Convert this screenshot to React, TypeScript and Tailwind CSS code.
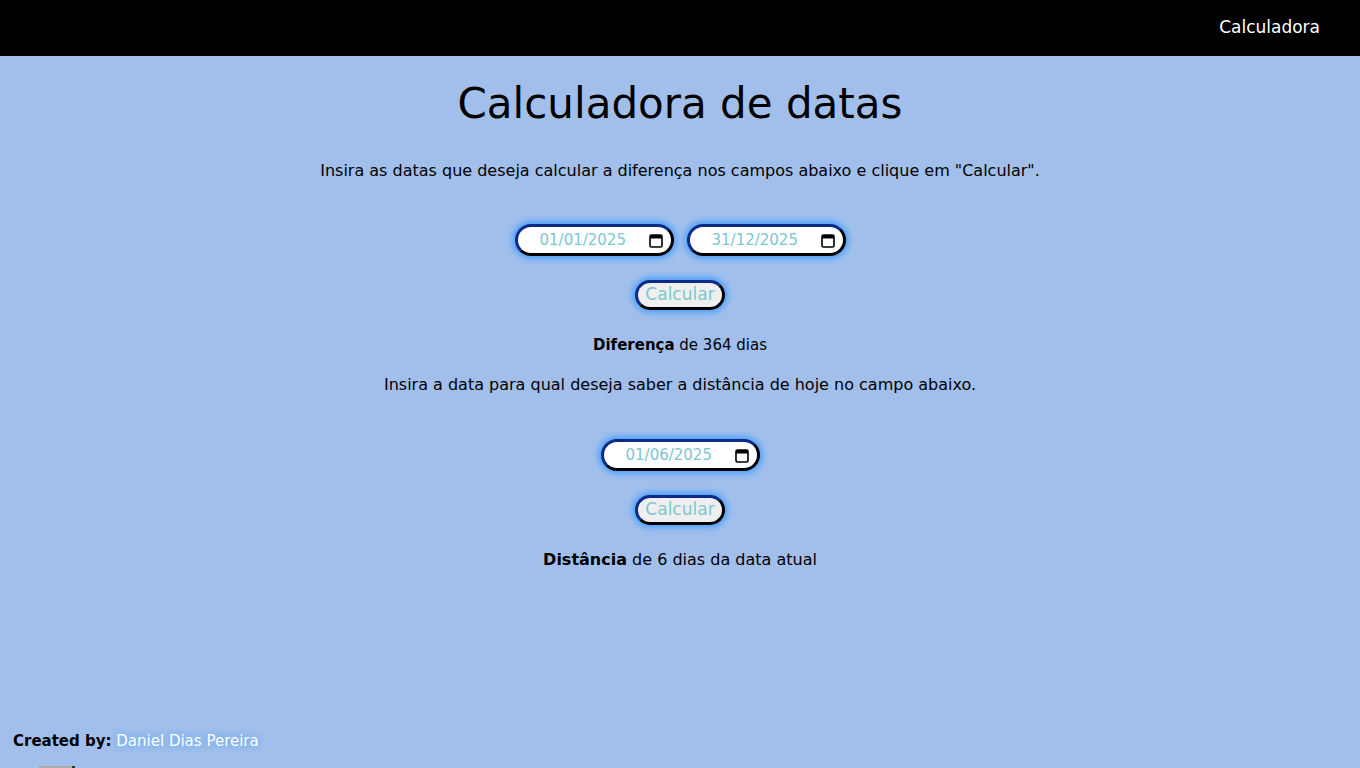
const font = { fontFamily: '"DejaVu Sans", "Open Sans", sans-serif' }

function CalendarIcon() {
  return (
    <svg width="14" height="15" viewBox="0 0 14 15" className="shrink-0">
      <rect x="1" y="2" width="12" height="12" rx="1.5" fill="none" stroke="#000" strokeWidth="1.6" />
      <rect x="1" y="2" width="12" height="3.5" fill="#000" />
    </svg>
  )
}

function DateField({ value }: { value: string }) {
  return (
    <div className="flex h-[32px] w-[159px] items-center justify-between rounded-full border-[3px] border-[#0c2a86] border-b-black border-r-black bg-white pl-[22px] pr-[8px] shadow-[0_0_7px_2px_#3a9bff]">
      <span className="text-[15px] text-[#7cc7d2]">{value}</span>
      <CalendarIcon />
    </div>
  )
}

function CalcButton() {
  return (
    <button className="flex h-[30px] w-[90px] items-center justify-center rounded-full border-[3px] border-[#0c2a86] border-b-black border-r-black bg-[#efefef] text-[17px] text-[#7cc7d2] shadow-[0_0_7px_2px_#3a9bff]">
      Calcular
    </button>
  )
}

export default function App() {
  return (
    <div className="flex h-screen flex-col overflow-hidden bg-[#a2bfeb] text-black" style={font}>
      <nav className="flex h-[56px] shrink-0 items-center justify-end bg-black pr-[40px]">
        <span className="text-[17px] text-white">Calculadora</span>
      </nav>

      <main className="flex flex-1 flex-col items-center">
        <h1 className="mt-[20px] text-[42px] leading-[56px]">Calculadora de datas</h1>
        <p className="mt-[27px] text-[16px] leading-[24px]">
          Insira as datas que deseja calcular a diferença nos campos abaixo e clique em "Calcular".
        </p>
        <div className="mt-[41px] flex gap-[13px]">
          <DateField value="01/01/2025" />
          <DateField value="31/12/2025" />
        </div>
        <div className="mt-[24px]">
          <CalcButton />
        </div>
        <p className="mt-[23px] text-[15px] leading-[24px]">
          <b>Diferença</b> de 364 dias
        </p>
        <p className="mt-[16px] text-[16px] leading-[24px]">
          Insira a data para qual deseja saber a distância de hoje no campo abaixo.
        </p>
        <div className="mt-[42px]">
          <DateField value="01/06/2025" />
        </div>
        <div className="mt-[24px]">
          <CalcButton />
        </div>
        <p className="mt-[23px] text-[16px] leading-[24px]">
          <b>Distância</b> de 6 dias da data atual
        </p>
      </main>

      <footer className="shrink-0 pl-[13px]">
        <p className="text-[15px] leading-[24px]">
          <b>Created by:</b>{' '}
          <span className="text-white [text-shadow:0_0_8px_#3a9bff]">Daniel Dias Pereira</span>
        </p>
        <div className="mt-[13px] ml-[26px] h-[2px] w-[36px] border-r-[3px] border-[#333] bg-[#a9a9a9]" />
      </footer>
    </div>
  )
}
